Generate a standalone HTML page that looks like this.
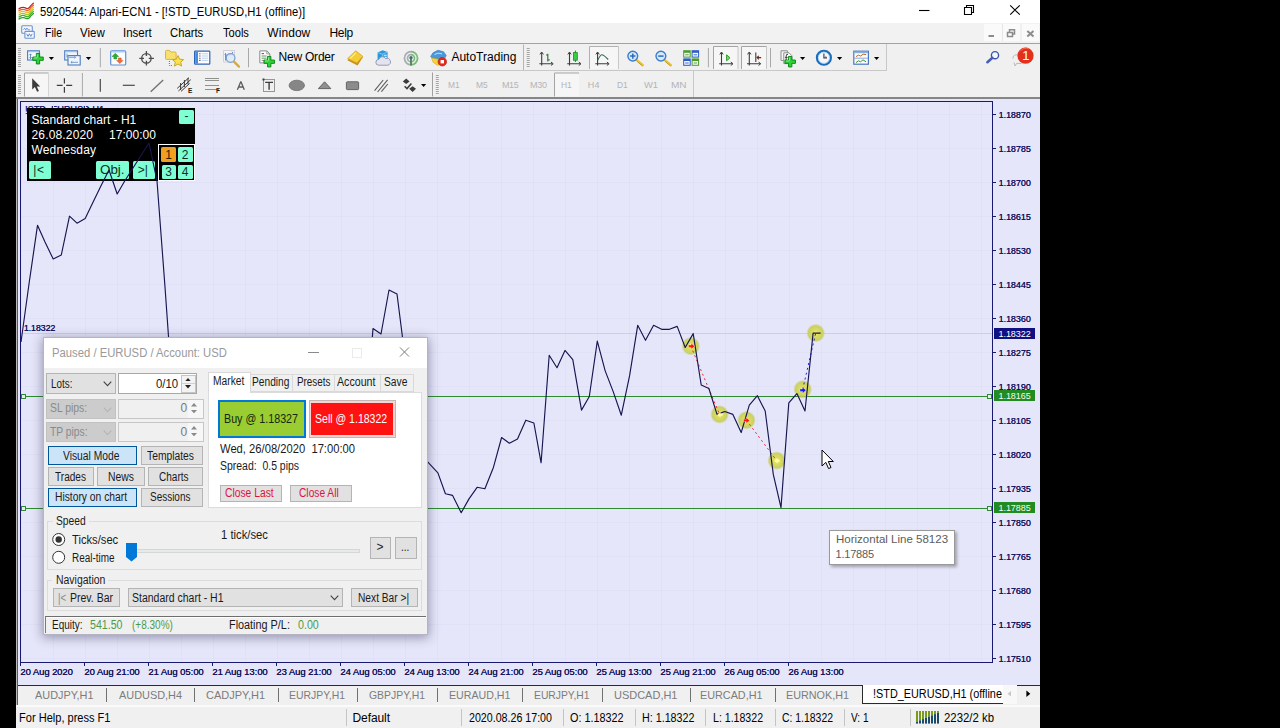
<!DOCTYPE html>
<html lang="en"><head><meta charset="utf-8"><title>5920544: Alpari-ECN1 - [!STD_EURUSD,H1 (offline)]</title>
<style>html,body{margin:0;padding:0;background:#000;}
body{width:1280px;height:728px;position:relative;overflow:hidden;font-family:"Liberation Sans",sans-serif;}
.b{position:absolute;display:block;}
.t{position:absolute;white-space:pre;line-height:1;transform-origin:0 0;}
</style></head><body>
<header id="window-top">
<div class="b" style="left:16px;top:0px;width:1024px;height:22.5px;background:#fff;"></div>
<span class="t" style="left:39.9px;top:6px;font-size:12px;color:#000;transform:scaleX(0.936);">5920544: Alpari-ECN1 - [!STD_EURUSD,H1 (offline)]</span>
<svg class="b" style="left:900px;top:0" width="140" height="22" viewBox="0 0 140 22"><path d="M19 10.5H29.5" stroke="#000" stroke-width="1.1"/><path d="M64.5 7.5H71.5V14.5H64.5ZM66.5 7.5V5.5H73.5V12.5H71.5" fill="none" stroke="#000" stroke-width="1.1"/><path d="M110.2 5.3L119.8 14.7M119.8 5.3L110.2 14.7" stroke="#000" stroke-width="1.1"/></svg>
<div class="b" style="left:16px;top:22.5px;width:1024px;height:20.5px;background:#f2f2f2;"></div>
<div class="b" style="left:16px;top:43px;width:1024px;height:1px;background:#a2a2a2;"></div>
<span class="t" style="left:44.5px;top:27px;font-size:12px;color:#000;transform:scaleX(0.879);">File</span>
<span class="t" style="left:80.2px;top:27px;font-size:12px;color:#000;transform:scaleX(0.961);">View</span>
<span class="t" style="left:123.3px;top:27px;font-size:12px;color:#000;transform:scaleX(0.956);">Insert</span>
<span class="t" style="left:170.2px;top:27px;font-size:12px;color:#000;transform:scaleX(0.939);">Charts</span>
<span class="t" style="left:222.5px;top:27px;font-size:12px;color:#000;transform:scaleX(0.925);">Tools</span>
<span class="t" style="left:267.3px;top:27px;font-size:12px;color:#000;letter-spacing:0.06px;">Window</span>
<span class="t" style="left:329.4px;top:27px;font-size:12px;color:#000;letter-spacing:-0.26px;">Help</span>
<div class="b" style="left:984px;top:24px;width:55px;height:17px;background:#fafafa;"></div>
<svg class="b" style="left:984px;top:24px" width="55" height="17" viewBox="0 0 55 17"><path d="M18.5 0V17M37 0V17" stroke="#e6e6e6" stroke-width="1"/><path d="M4.5 12H10" stroke="#8c8c8c" stroke-width="2"/><path d="M23.5 8.5H28.5V12.5H23.5ZM25.5 8V5.8H30.5V10H29" fill="none" stroke="#8c8c8c" stroke-width="1.5"/><path d="M43.3 7L49.5 12.6M49.5 7L43.3 12.6" stroke="#8c8c8c" stroke-width="2"/></svg>
<div class="b" style="left:16px;top:44px;width:1024px;height:54px;background:#f0f0f0;"></div>
<div class="b" style="left:16px;top:70px;width:870px;height:1px;background:#c8c8c8;"></div>
<div class="b" style="left:885.5px;top:44px;width:1px;height:27px;background:#c8c8c8;"></div>
<div class="b" style="left:693px;top:71px;width:1px;height:26px;background:#c8c8c8;"></div>
<div class="b" style="left:16px;top:97px;width:1024px;height:1.6px;background:#868686;"></div>
<svg class="b" style="left:16px;top:0" width="1024" height="100" viewBox="16 0 1024 100"><defs><linearGradient id="gb" x1="0" y1="0" x2="0" y2="1"><stop offset="0" stop-color="#9cc4f0"/><stop offset="1" stop-color="#dcecfc"/></linearGradient></defs><path d="M19 8.8Q22.5 6.2 25.5 8.0T30.6 5.8L33.4 3.2" stroke="#c82020" stroke-width="1.25" fill="none" stroke-linecap="round" stroke-dasharray="1.6 .7"/><path d="M19 10.8Q22.5 8.2 25.5 10.0T30.6 7.8L33.4 5.2" stroke="#e06a20" stroke-width="1.25" fill="none" stroke-linecap="round" stroke-dasharray="1.6 .7"/><path d="M19 12.9Q22.5 10.3 25.5 12.1T30.6 9.9L33.4 7.3" stroke="#e8c020" stroke-width="1.25" fill="none" stroke-linecap="round" stroke-dasharray="1.6 .7"/><path d="M19 14.9Q22.5 12.3 25.5 14.2T30.6 11.9L33.4 9.3" stroke="#9cc828" stroke-width="1.25" fill="none" stroke-linecap="round" stroke-dasharray="1.6 .7"/><path d="M19 17.0Q22.5 14.4 25.5 16.2T30.6 14.0L33.4 11.4" stroke="#3cae2c" stroke-width="1.25" fill="none" stroke-linecap="round" stroke-dasharray="1.6 .7"/><path d="M19 19.1Q22.5 16.5 25.5 18.2T30.6 16.1L33.4 13.5" stroke="#2c9a2c" stroke-width="1.25" fill="none" stroke-linecap="round" stroke-dasharray="1.6 .7"/><rect x="21.7" y="25.8" width="10.6" height="7.4" rx="1" fill="#f4f8fe" stroke="#6c94d4" stroke-width="1.1"/><path d="M23.5 29.6l1.2-1.4l1 1.8l1.2-2l1.2 1.8h2" stroke="#5a84c8" stroke-width=".8" fill="none"/><rect x="24.9" y="31.4" width="9.4" height="6.8" rx=".8" fill="#f4f8fe" stroke="#6c94d4" stroke-width="1.1"/><path d="M26.6 33.8l1.4 2.6l1.4-2.6l1.4 2.6l1.4-2.6" stroke="#4a74b8" stroke-width=".8" fill="none"/><path d="M18 48.5h3M18 50.5h3M18 52.5h3M18 54.5h3M18 56.5h3M18 58.5h3M18 60.5h3M18 62.5h3M18 64.5h3M18 66.5h3" stroke="#a4a4a4" stroke-width="1" fill="none"/><path d="M18 75.5h3M18 77.5h3M18 79.5h3M18 81.5h3M18 83.5h3M18 85.5h3M18 87.5h3M18 89.5h3M18 91.5h3M18 93.5h3" stroke="#a4a4a4" stroke-width="1" fill="none"/><rect x="27.6" y="50.8" width="11.8" height="9.2" fill="#f6faff" stroke="#4a7cc0" stroke-width="1.1"/><path d="M28 51.6H39" stroke="#9cc0ec" stroke-width="1.3"/><path d="M30.5 54v4.5M29.4 55.2l1.1-1.3l1.1 1.3M29.4 57.4l1.1 1.3l1.1-1.3" stroke="#5078b0" stroke-width=".8" fill="none"/><path d="M36.35 53.45H39.65V57.050000000000004H43.25V60.35H39.65V63.95H36.35V60.35H32.75V57.050000000000004H36.35Z" fill="#2fd03a" stroke="#0f8a1a" stroke-width="1" stroke-linejoin="round"/><path d="M37.25 54.45V57.650000000000006M33.75 57.95H36.95" stroke="#9ff0a0" stroke-width=".9" fill="none"/><path d="M48.8 57.0H54.0L51.4 59.9Z" fill="#000"/><rect x="64.7" y="50.8" width="12.8" height="9.2" fill="#eef5fd" stroke="#4a7cc0" stroke-width="1.1"/><path d="M65 51.6H77" stroke="#9cc0ec" stroke-width="1.3"/><rect x="68" y="55.6" width="12.2" height="9.4" fill="#eef5fd" stroke="#4a7cc0" stroke-width="1.1"/><path d="M67 53.6v4M69 57.3h6.5M74.3 56.2l1.3 1.1l-1.3 1.1M78 62.3h-7M72.2 61.2l-1.3 1.1l1.3 1.1" stroke="#5a86c4" stroke-width=".8" fill="none"/><path d="M85.9 57.0H91.1L88.5 59.9Z" fill="#000"/><path d="M100.3 48V67.3" stroke="#a8a8a8" stroke-width="1"/><rect x="110.7" y="50.8" width="15" height="14.2" rx="1" fill="#fbfdff" stroke="#5a90d8" stroke-width="1.2"/><path d="M111.2 51.8H125.2" stroke="#a8ccf4" stroke-width="1.4"/><path d="M115.3 53.3l3.3 3.2h-1.9v2.4h-2.8v-2.4h-1.9z" fill="#2cae34" stroke="#1a8a22" stroke-width=".5"/><path d="M119.8 63.6l-3.2-3.2h1.8v-2.4h2.8v2.4h1.8z" fill="#f06a3a" stroke="#d04a20" stroke-width=".5"/><circle cx="146.4" cy="58.4" r="4.7" fill="none" stroke="#4a4a4a" stroke-width="1.3"/><path d="M146.4 50.9V56M146.4 60.8V65.6M139.3 58.4H144M148.8 58.4H153.9" stroke="#4a4a4a" stroke-width="1.3" fill="none"/><path d="M165.5 51.4q0-1 1-1h3.2l1.2 1.6h4.2q1 0 1 1v5.6q0 .8-1 .8h-8.6q-1 0-1-.8z" fill="#f8e070" stroke="#d4b030" stroke-width=".9"/><path d="M169.4 61v4.5h2.6" stroke="#707070" stroke-width="1" stroke-dasharray="1 1" fill="none"/><path d="M178 55.6l1.7 3.6l3.9.4l-2.9 2.6l.9 3.9l-3.6-2.1l-3.6 2.1l.9-3.9l-2.9-2.6l3.9-.4z" fill="#fbe24a" stroke="#c8a018" stroke-width=".9" stroke-linejoin="round"/><rect x="194.6" y="51.2" width="15.2" height="13" rx=".8" fill="#fff" stroke="#2c64b4" stroke-width="1.2"/><rect x="195.2" y="51.8" width="2.8" height="11.8" fill="#4a8ae0"/><path d="M199.4 53.8h1M199.4 56h1M199.4 58.2h1M199.4 60.4h1" stroke="#102040" stroke-width="1.1"/><path d="M201.6 53.8h6.6M201.6 56h6.6M201.6 58.2h6.6M201.6 60.4h6.6" stroke="#a8c4e8" stroke-width=".8"/><rect x="223.6" y="50.6" width="11" height="11.4" fill="#f4f4f8" stroke="#c8c8d0" stroke-width=".8"/><path d="M225.5 60.5v-7M224.6 54.4l.9-1l.9 1M231.8 51.8l1.2 1l-1.2 1M225.5 56.5l2.6-2.6l2 1.6l2.6-2.8" stroke="#5a88c8" stroke-width=".9" fill="none"/><circle cx="230.6" cy="58" r="4.3" fill="#d8e8f8" fill-opacity=".75" stroke="#7aa0d0" stroke-width="1.2"/><path d="M234 61.6L239 66.6" stroke="#d8a838" stroke-width="2.2" stroke-linecap="round"/><path d="M248.5 48V67.3" stroke="#a8a8a8" stroke-width="1"/><path d="M259.8 50.9h7l3 3v9h-10z" fill="#fdfdfd" stroke="#8a8a8a" stroke-width="1"/><path d="M266.8 50.9v3h3" fill="none" stroke="#8a8a8a" stroke-width=".8"/><path d="M261.6 53.6h2.4" stroke="#606060" stroke-width="1.1"/><path d="M261.6 56h5M261.6 58.2h5" stroke="#58a060" stroke-width="1"/><path d="M261.6 60.4h3" stroke="#909090" stroke-width="1"/><path d="M267.55 56.45H270.84999999999997V60.050000000000004H274.45V63.35H270.84999999999997V66.95H267.55V63.35H263.95V60.050000000000004H267.55Z" fill="#2fd03a" stroke="#0f8a1a" stroke-width="1" stroke-linejoin="round"/><path d="M268.45 57.45V60.650000000000006M264.95 60.95H268.15000000000003" stroke="#9ff0a0" stroke-width=".9" fill="none"/><path d="M347.4 60.2L355.6 51l7.3 6.3l-5.4 8.1z" fill="#c8901c"/><path d="M347.6 58.6L355.8 50.8l7 5.6l-6 6.6z" fill="#f4cc34" stroke="#d0a020" stroke-width=".7"/><path d="M350 58.6l6-5.8" stroke="#fbe98a" stroke-width="1.4" fill="none"/><path d="M377.6 52.6l5-2.4l5 1.8v7.4h-10z" fill="#2c98dc"/><path d="M377.6 52.6l5 1.6l5-2.2M382.6 54.2v6" stroke="#8cd0f4" stroke-width=".8" fill="none"/><path d="M383.8 55.2h3M383.8 57.4h3" stroke="#e8f6ff" stroke-width="1.1"/><path d="M378.6 65.2a2.9 2.9 0 0 1 .3-5.8a3.6 3.6 0 0 1 6.6-.9a3.1 3.1 0 0 1 2.6 6.7z" fill="#e4e4f0" stroke="#8c94ac" stroke-width=".9"/><circle cx="411" cy="58.2" r="7.4" fill="#dcdcdc"/><path d="M411 50.8a7.4 7.4 0 0 1 0 14.8z" fill="#7cba7c"/><path d="M411 50.8a7.4 7.4 0 0 0 0 14.8z" fill="#a8aeb4"/><circle cx="411" cy="58.2" r="5" fill="none" stroke="#eef2ee" stroke-width="1.3"/><circle cx="411" cy="58.2" r="2.6" fill="#eef2ee"/><circle cx="411" cy="57.8" r="1.7" fill="#4a6a7a"/><path d="M411 58.5V65.4" stroke="#3c7c4c" stroke-width="1.6"/><path d="M430.6 56.4l2.4-3.6l5-2.6l5.6 1.6l2.6 3.6l-1 2.2l-6.6 1.6l-6-.8z" fill="#4a98dc" stroke="#2c78c0" stroke-width=".6"/><path d="M431.6 58l6.4 1.2l7.2-1.8l-1.6 4.8l-6 3.2l-4.6-3.2z" fill="#f4d43c" stroke="#d4ac20" stroke-width=".6"/><path d="M434.5 54.6q3-2.4 7.5-.8" stroke="#bfe0fa" stroke-width="1" fill="none"/><circle cx="442.3" cy="61.7" r="4.3" fill="#e02a1c" stroke="#b81a10" stroke-width=".6"/><rect x="440.6" y="60" width="3.4" height="3.4" fill="#fff"/><path d="M523.5 44.5V70" stroke="#b4b4b4" stroke-width="1"/><path d="M526.7 48.5h3M526.7 50.5h3M526.7 52.5h3M526.7 54.5h3M526.7 56.5h3M526.7 58.5h3M526.7 60.5h3M526.7 62.5h3M526.7 64.5h3M526.7 66.5h3" stroke="#a4a4a4" stroke-width="1" fill="none"/><path d="M541.6999999999999 65.4V52.6M539.4 63.75H552.4" stroke="#3c3c3c" stroke-width="1.1" fill="none"/><path d="M539.9999999999999 54.4L541.6999999999999 52L543.4 54.4M551.0 62.05L553.1999999999999 63.75L551.0 65.45" stroke="#3c3c3c" stroke-width="1" fill="none"/><path d="M547.8 53.8V61.4M546 55h1.8M547.8 59.8h1.9" stroke="#2c7c3c" stroke-width="1.2" fill="none"/><path d="M569.5 65.4V52.6M567.2 63.75H580.2" stroke="#3c3c3c" stroke-width="1.1" fill="none"/><path d="M567.8 54.4L569.5 52L571.2 54.4M578.8000000000001 62.05L581.0 63.75L578.8000000000001 65.45" stroke="#3c3c3c" stroke-width="1" fill="none"/><path d="M575.4 50.6V62" stroke="#1a8a2a" stroke-width="1"/><rect x="573.5" y="52.6" width="3.8" height="7.6" fill="#34d044" stroke="#1a8a2a" stroke-width=".8"/><rect x="589.5" y="46.5" width="29" height="22.5" fill="#f6f6f6"/><path d="M589.5 69V46.5H618.5" stroke="#b0b0b0" stroke-width="1" fill="none"/><path d="M618.5 46.5V69" stroke="#c8c8c8" stroke-width="1" fill="none"/><path d="M597.5999999999999 65.4V52.6M595.3 63.75H608.3" stroke="#3c3c3c" stroke-width="1.1" fill="none"/><path d="M595.8999999999999 54.4L597.5999999999999 52L599.3 54.4M606.9 62.05L609.0999999999999 63.75L606.9 65.45" stroke="#3c3c3c" stroke-width="1" fill="none"/><path d="M597.8 60Q600.4 54.4 602.2 54.7T608.2 59.5" stroke="#2c6c4c" stroke-width="1.1" fill="none"/><path d="M636.4 59.8L642.8 65.2" stroke="#e8c030" stroke-width="2.3" stroke-linecap="round"/><path d="M637.3 61.6L642.4 66" stroke="#a89030" stroke-width=".7"/><circle cx="632.8" cy="56.1" r="4.9" fill="#d8e8fa" stroke="#3a7cd0" stroke-width="1.4"/><path d="M630.0999999999999 56.1H635.5M632.8 53.4V58.8" stroke="#2c6cc0" stroke-width="1.5" fill="none"/><path d="M664.5 59.8L670.9 65.2" stroke="#e8c030" stroke-width="2.3" stroke-linecap="round"/><path d="M665.4 61.6L670.5 66" stroke="#a89030" stroke-width=".7"/><circle cx="660.9" cy="56.1" r="4.9" fill="#d8e8fa" stroke="#3a7cd0" stroke-width="1.4"/><path d="M658.1999999999999 56.1H663.6" stroke="#2c6cc0" stroke-width="1.5" fill="none"/><rect x="683.2" y="50.2" width="7.5" height="7.4" fill="#4c9c2c"/><rect x="684.2" y="52.800000000000004" width="5.5" height="3.8" fill="#f4f8ff"/><path d="M685.2 54.800000000000004h3.5" stroke="#4c9c2c" stroke-width=".9"/><rect x="691.6" y="50.2" width="7.5" height="7.4" fill="#2c5cc4"/><rect x="692.6" y="52.800000000000004" width="5.5" height="3.8" fill="#f4f8ff"/><path d="M693.6 54.800000000000004h3.5" stroke="#2c5cc4" stroke-width=".9"/><rect x="683.2" y="58.4" width="7.5" height="7.4" fill="#2c5cc4"/><rect x="684.2" y="61.0" width="5.5" height="3.8" fill="#f4f8ff"/><path d="M685.2 63.0h3.5" stroke="#2c5cc4" stroke-width=".9"/><rect x="691.6" y="58.4" width="7.5" height="7.4" fill="#4c9c2c"/><rect x="692.6" y="61.0" width="5.5" height="3.8" fill="#f4f8ff"/><path d="M693.6 63.0h3.5" stroke="#4c9c2c" stroke-width=".9"/><path d="M708.4 48V67.3" stroke="#a8a8a8" stroke-width="1"/><rect x="713.5" y="46.5" width="24.5" height="22.5" fill="#f6f6f6"/><path d="M713.5 69V46.5H738.0" stroke="#a4a4a4" stroke-width="1" fill="none"/><path d="M738.0 46.5V69" stroke="#c8c8c8" stroke-width="1" fill="none"/><rect x="741.5" y="46.5" width="25" height="22.5" fill="#f6f6f6"/><path d="M741.5 69V46.5H766.5" stroke="#a4a4a4" stroke-width="1" fill="none"/><path d="M766.5 46.5V69" stroke="#c8c8c8" stroke-width="1" fill="none"/><path d="M721.5 65.4V52.6M719.2 63.75H732.2" stroke="#3c3c3c" stroke-width="1.1" fill="none"/><path d="M719.8 54.4L721.5 52L723.2 54.4M730.8000000000001 62.05L733.0 63.75L730.8000000000001 65.45" stroke="#3c3c3c" stroke-width="1" fill="none"/><path d="M726.6 54.8V60.8L730 57.8Z" fill="#7cdc6c" stroke="#2c9c2c" stroke-width="1" stroke-linejoin="round"/><path d="M749.3 65.4V52.6M747 63.75H760" stroke="#3c3c3c" stroke-width="1.1" fill="none"/><path d="M747.5999999999999 54.4L749.3 52L751.0 54.4M758.6 62.05L760.8 63.75L758.6 65.45" stroke="#3c3c3c" stroke-width="1" fill="none"/><path d="M755.8 52.6V62" stroke="#3c3c3c" stroke-width="1.1"/><path d="M761.2 57.6H757M758.8 55.8L757 57.6L758.8 59.4" stroke="#6c2c1c" stroke-width="1.1" fill="none"/><path d="M770.5 48V67.3" stroke="#a8a8a8" stroke-width="1"/><path d="M781 50.8h6.4v9.6h-6.4z" fill="#f6f6f6" stroke="#8c8c8c" stroke-width="1"/><path d="M783.8 52.8h5.2l2.8 2.8v8h-8z" fill="#fdfdfd" stroke="#8c8c8c" stroke-width="1"/><path d="M788 54.4q-1.8-.6-1.8 1.6v5M785 57.4h2.6" stroke="#404040" stroke-width="1" fill="none"/><path d="M788.5500000000001 56.45H791.85V60.050000000000004H795.45V63.35H791.85V66.95H788.5500000000001V63.35H784.95V60.050000000000004H788.5500000000001Z" fill="#2fd03a" stroke="#0f8a1a" stroke-width="1" stroke-linejoin="round"/><path d="M789.45 57.45V60.650000000000006M785.95 60.95H789.1500000000001" stroke="#9ff0a0" stroke-width=".9" fill="none"/><path d="M800.0 57.0H805.2L802.6 59.9Z" fill="#000"/><circle cx="823.9" cy="57.75" r="7" fill="#f4f8fc" stroke="#1c6cbc" stroke-width="2.2"/><circle cx="823.9" cy="57.75" r="5.6" fill="none" stroke="#9cc8ec" stroke-width=".7"/><path d="M823.9 53.6V57.9H827" stroke="#303840" stroke-width="1.1" fill="none"/><path d="M823.9 57.9l2.4-1.4" stroke="#c04030" stroke-width=".8"/><path d="M837.0 57.0H842.2L839.6 59.9Z" fill="#000"/><rect x="853.8" y="51.2" width="14.6" height="13" fill="#fbfdff" stroke="#4a78c0" stroke-width="1.2"/><path d="M854.4 52.4H868" stroke="#88b0e4" stroke-width="1.6"/><path d="M854.4 58.2H868" stroke="#6c94d0" stroke-width=".8"/><path d="M856 56.6l2.4-1.4l2.2.8l2.6-1.8l3 .4" stroke="#b86a20" stroke-width="1" fill="none"/><path d="M856 62.6l2.4-1.8l2.2 1l2.4-2l3 2" stroke="#3c8c3c" stroke-width="1" fill="none"/><path d="M874.0 57.0H879.2L876.6 59.9Z" fill="#000"/><circle cx="995" cy="55.2" r="3.6" fill="#f4f6fc" stroke="#3c54ac" stroke-width="1.4"/><path d="M992.4 57.8L987.4 62.2" stroke="#4460b8" stroke-width="2.6" stroke-linecap="round"/><path d="M1013 58.5a3.4 3.4 0 0 1 4.5-3.6M1014 62.6l1.2 3.4l1.4-2.6h5" stroke="#b8b8b8" stroke-width="1" fill="none"/><circle cx="1025.5" cy="55.7" r="8.1" fill="#e2301c"/><path d="M1020 51.5a7 7 0 0 1 9-2.6" stroke="#f06a50" stroke-width="1" fill="none"/><rect x="24.5" y="73" width="24" height="23.5" fill="#f6f6f6"/><path d="M24.5 96.5V73H48.5" stroke="#a4a4a4" stroke-width="1" fill="none"/><path d="M48.5 73V96.5" stroke="#d4d4d4" stroke-width="1" fill="none"/><path d="M32.2 78.2V89.6L34.9 87.1L37.1 91.8L38.9 90.9L36.8 86.4H40.2Z" fill="#3c3c3c"/><path d="M64.4 78.2V83.6M64.4 87V92.8M56.8 85.3H62.6M66.2 85.3H72.2" stroke="#3c3c3c" stroke-width="1.2" fill="none"/><path d="M82.4 73V96.4" stroke="#a8a8a8" stroke-width="1"/><path d="M100.3 79V91.7" stroke="#4a4a4a" stroke-width="1.2"/><path d="M122.8 85.3H134.8" stroke="#4a4a4a" stroke-width="1.2"/><path d="M150.7 91.7L163.2 80" stroke="#707070" stroke-width="1.3"/><path d="M177.2 88.4L189 77.6M178.4 91L190.8 79.6M181 91.4L189.6 83.4M180.6 83v7M184.4 80v7M188 78v6.4" stroke="#3c3c3c" stroke-width="1" fill="none"/><path d="M205.5 78.5H219.5M205.5 80.5H219.5M205.5 85.5H219.5M205.5 89.5H219.5" stroke="#303030" stroke-width="1" stroke-dasharray="1 1" fill="none"/><path d="M240.85 81.4L237.4 89.8M240.85 81.4L244.3 89.8M238.6 87h4.6" stroke="#5c5c5c" stroke-width="1.3" fill="none"/><rect x="263.5" y="79.5" width="11" height="12" fill="none" stroke="#3c3c3c" stroke-width="1" stroke-dasharray="1 1"/><path d="M265.2 82.4H273M269.1 82.4V89.8" stroke="#3c3c3c" stroke-width="1.4" fill="none"/><rect x="262.5" y="78.5" width="2" height="2" fill="#3c3c3c"/><ellipse cx="296.8" cy="85.4" rx="7.7" ry="5.2" fill="#868686" stroke="#6c6c6c" stroke-width=".8"/><path d="M324.6 81.8L330.8 88.6H318.4Z" fill="#909090" stroke="#646464" stroke-width="1" stroke-linejoin="round"/><rect x="346.4" y="81.8" width="12.2" height="7.8" rx=".8" fill="#8c8c8c" stroke="#646464" stroke-width="1"/><path d="M374.6 90.6L383.2 80M377.6 92L387.6 79.8M381.4 91.6L387.8 84" stroke="#5c5c5c" stroke-width="1.1" fill="none"/><path d="M406.2 78.4L409.6 81.6L406.2 84L402.8 81.6ZM412.6 92L409.2 88.8L412.6 86.2L416 88.8Z" fill="#3c3c3c"/><path d="M404.6 86.2l2.4 2.4l4.4-5.2" stroke="#3c3c3c" stroke-width="1.5" fill="none"/><path d="M421.0 84.0H426.20000000000005L423.6 86.9Z" fill="#000"/><path d="M432.5 72.5V96.4" stroke="#a0a0a0" stroke-width="1"/><path d="M435.8 75.5h3M435.8 77.5h3M435.8 79.5h3M435.8 81.5h3M435.8 83.5h3M435.8 85.5h3M435.8 87.5h3M435.8 89.5h3M435.8 91.5h3M435.8 93.5h3" stroke="#a4a4a4" stroke-width="1" fill="none"/><rect x="554.5" y="73" width="24.5" height="23.5" fill="#f6f6f6"/><path d="M554.5 96.5V73H579" stroke="#a4a4a4" stroke-width="1" fill="none"/></svg>
<span class="t" style="left:188.1px;top:88px;font-size:6.5px;color:#1c1c1c;font-weight:bold;">E</span>
<span class="t" style="left:215.9px;top:88px;font-size:6.5px;color:#1c1c1c;font-weight:bold;">F</span>
<span class="t" style="left:278.6px;top:51px;font-size:12px;color:#000;letter-spacing:-0.23px;">New Order</span>
<span class="t" style="left:451.4px;top:51px;font-size:12px;color:#000;letter-spacing:0.01px;">AutoTrading</span>
<span class="t" style="left:448px;top:81px;font-size:9px;color:#b4b4b4;transform:scaleX(0.936);">M1</span>
<span class="t" style="left:476.1px;top:81px;font-size:9px;color:#b4b4b4;transform:scaleX(0.936);">M5</span>
<span class="t" style="left:501.9px;top:81px;font-size:9px;color:#b4b4b4;letter-spacing:-0.30px;">M15</span>
<span class="t" style="left:530px;top:81px;font-size:9px;color:#b4b4b4;letter-spacing:-0.30px;">M30</span>
<span class="t" style="left:561.1px;top:81px;font-size:9px;color:#b4b4b4;transform:scaleX(0.939);">H1</span>
<span class="t" style="left:587.8px;top:81px;font-size:9px;color:#b4b4b4;letter-spacing:0.19px;">H4</span>
<span class="t" style="left:616.9px;top:81px;font-size:9px;color:#b4b4b4;transform:scaleX(0.939);">D1</span>
<span class="t" style="left:644px;top:81px;font-size:9px;color:#b4b4b4;transform:scaleX(1.044);">W1</span>
<span class="t" style="left:670.7px;top:81px;font-size:9px;color:#b4b4b4;transform:scaleX(1.115);">MN</span>
<span class="t" style="left:1022.2px;top:49px;font-size:13px;color:#fff;">1</span>
</header>
<main id="chart">
<div class="b" style="left:18px;top:99px;width:1022px;height:586px;background:#e6e6fa;"></div>
<span class="t" style="left:24.9px;top:106px;font-size:10px;color:#191970;transform:scaleX(0.917);text-shadow:.3px 0 0 #191970;">!STD_EURUSD,H1</span>
<svg class="b" style="left:0;top:0" width="1280" height="728" viewBox="0 0 1280 728"><path d="M21.5 102V662 M53.5 102V662 M85.5 102V662 M117.5 102V662 M149.5 102V662 M181.5 102V662 M213.5 102V662 M245.5 102V662 M277.5 102V662 M309.5 102V662 M341.5 102V662 M373.5 102V662 M405.5 102V662 M437.5 102V662 M469.5 102V662 M501.5 102V662 M533.5 102V662 M565.5 102V662 M597.5 102V662 M629.5 102V662 M661.5 102V662 M693.5 102V662 M725.5 102V662 M757.5 102V662 M789.5 102V662 M821.5 102V662 M853.5 102V662 M885.5 102V662 M917.5 102V662 M949.5 102V662 M981.5 102V662 M21 114.5H992 M21 148.5H992 M21 182.5H992 M21 216.5H992 M21 250.5H992 M21 284.5H992 M21 318.5H992 M21 352.5H992 M21 386.5H992 M21 420.5H992 M21 454.5H992 M21 488.5H992 M21 522.5H992 M21 556.5H992 M21 590.5H992 M21 624.5H992 M21 658.5H992" stroke="#e0e0f6" stroke-width="1" fill="none"/><path d="M21 333.5H992" stroke="#cfcfe0" stroke-width="1"/></svg>
<div class="b" style="left:27px;top:108px;width:168px;height:73px;background:#000;"></div>
<span class="t" style="left:31.5px;top:114px;font-size:12px;color:#fff;">Standard chart - H1</span>
<span class="t" style="left:31.5px;top:129px;font-size:12px;color:#fff;letter-spacing:0.16px;">26.08.2020</span>
<span class="t" style="left:109px;top:129px;font-size:12px;color:#fff;letter-spacing:0.04px;">17:00:00</span>
<span class="t" style="left:31.5px;top:144px;font-size:12px;color:#fff;letter-spacing:0.17px;">Wednesday</span>
<div class="b" style="left:179px;top:109.5px;width:15px;height:14px;background:#7fffd4;border-radius:1.5px;"></div>
<span class="t" style="left:184.5px;top:110px;font-size:12px;color:#103020;">-</span>
<div class="b" style="left:29px;top:161px;width:22px;height:17.5px;background:#7fffd4;border-radius:1.5px;"></div>
<span class="t" style="left:33.2px;top:164px;font-size:12px;color:#103020;letter-spacing:0.68px;">|&lt;</span>
<div class="b" style="left:96px;top:161px;width:33px;height:17.5px;background:#7fffd4;border-radius:1.5px;"></div>
<span class="t" style="left:99.5px;top:164px;font-size:12px;color:#103020;transform:scaleX(1.113);">Obj.</span>
<div class="b" style="left:133px;top:161px;width:21.5px;height:17.5px;background:#7fffd4;border-radius:1.5px;"></div>
<span class="t" style="left:137.8px;top:164px;font-size:12px;color:#103020;letter-spacing:-0.12px;">&gt;|</span>
<div class="b" style="left:158px;top:144px;width:37px;height:37px;background:#000;border:1px solid #fff;box-sizing:border-box;"></div>
<div class="b" style="left:161px;top:147px;width:14.5px;height:14.5px;background:#f0a020;border-radius:1.5px;"></div>
<div class="b" style="left:178px;top:147px;width:14.5px;height:14.5px;background:#7fffd4;border-radius:1.5px;"></div>
<div class="b" style="left:161.5px;top:164.5px;width:14.5px;height:14px;background:#7fffd4;border-radius:1.5px;"></div>
<div class="b" style="left:178px;top:164.5px;width:14.5px;height:14px;background:#7fffd4;border-radius:1.5px;"></div>
<span class="t" style="left:165.3px;top:149px;font-size:12px;color:#302000;">1</span>
<span class="t" style="left:181.8px;top:149px;font-size:12px;color:#103020;">2</span>
<span class="t" style="left:165.3px;top:166px;font-size:12px;color:#103020;">3</span>
<span class="t" style="left:181.8px;top:166px;font-size:12px;color:#103020;">4</span>
<svg class="b" style="left:0;top:0" width="1280" height="728" viewBox="0 0 1280 728"><path d="M20.5 101V662.5M20 101.5H993M992.5 101V663M20 662.5H993" stroke="#191970" stroke-width="1" fill="none"/><path d="M993 114.5H996 M993 148.5H996 M993 182.5H996 M993 216.5H996 M993 250.5H996 M993 284.5H996 M993 318.5H996 M993 352.5H996 M993 386.5H996 M993 420.5H996 M993 454.5H996 M993 488.5H996 M993 522.5H996 M993 556.5H996 M993 590.5H996 M993 624.5H996 M993 658.5H996 M20.5 663V666 M84.5 663V666 M148.5 663V666 M212.5 663V666 M276.5 663V666 M340.5 663V666 M404.5 663V666 M468.5 663V666 M532.5 663V666 M596.5 663V666 M660.5 663V666 M724.5 663V666 M788.5 663V666" stroke="#191970" stroke-width="1" fill="none"/><path d="M21 396.5H992M21 508.5H992" stroke="#2e8b2e" stroke-width="1.2" fill="none"/><g fill="#eaeafa" stroke="#2e8b2e" stroke-width="1"><rect x="21.5" y="394.5" width="4" height="4"/><rect x="21.5" y="506.5" width="4" height="4"/><rect x="987.5" y="394.5" width="4" height="4"/><rect x="987.5" y="506.5" width="4" height="4"/></g><defs><radialGradient id="hl"><stop offset="0" stop-color="#f8f868" stop-opacity="1"/><stop offset="0.3" stop-color="#dede54" stop-opacity=".95"/><stop offset="0.78" stop-color="#c4cc50" stop-opacity=".85"/><stop offset="1" stop-color="#c8d068" stop-opacity="0"/></radialGradient></defs><circle cx="690.8" cy="346.1" r="9.5" fill="url(#hl)"/><circle cx="719.6" cy="414.4" r="9.5" fill="url(#hl)"/><circle cx="746.4" cy="420.2" r="9.5" fill="url(#hl)"/><circle cx="776.7" cy="460.6" r="9.5" fill="url(#hl)"/><circle cx="802.7" cy="389.3" r="9.5" fill="url(#hl)"/><circle cx="815.7" cy="333.1" r="9.5" fill="url(#hl)"/><path d="M690.8 346.1L719.6 414.4M746.4 420.2L776.7 460.6" stroke="#f02828" stroke-width="1" stroke-dasharray="2 3" fill="none"/><path d="M802.7 389.3L815.7 333.1" stroke="#2020e0" stroke-width="1" stroke-dasharray="2 3" fill="none"/><path d="M21 342L29 284L37.5 225.3L45 242L53.2 259L61.3 255L69.5 216.2L77 223.2L85.2 218.6L93 202.3L101 185.8L109 170L117.2 194L125 180.5L133 168L141 155.5L149 143L157 181L165 287L173 400" stroke="#161650" stroke-width="1.15" fill="none" stroke-linejoin="round"/><path d="M365 430L373 328.6L381 334L389 290L397 294L405 357" stroke="#161650" stroke-width="1.15" fill="none" stroke-linejoin="round"/><path d="M421 455L427.2 461.4L437.9 472.9L445.4 493.7L452.6 495.4L461.2 512.7L469 498.9L477.1 487.3L484.9 488.8L493.5 467.2L501.6 437.5L509.4 443.2L517.5 438.9L525.8 420.2L533.9 423L541.1 462.8L549.2 355.3L557 367.7L565 350.4L572.8 359.6L581.5 410.1L589.3 396.5L597.3 341.1L605.1 370.6L613.2 391.6L621.3 415.2L629.6 375.7L637.7 325.3L645.5 340.3L653.6 325.3L661.6 329.3L669.4 329.3L677.2 326.4L685.2 347.5L693.2 333.6L701.2 385L708.9 388.5L717 414.4L724.8 411.5L732.9 414.4L741.2 432.6L749.3 405.2L757.4 395.7L765.2 411L773.3 474.4L781 507.6L788.8 402.9L796.9 393.6L805 411L813.1 333.1L820.6 333.1" stroke="#161650" stroke-width="1.15" fill="none" stroke-linejoin="round"/><path d="M688.6 345.1h2.6v-1.8l3.4 3.0l-3.4 3.0v-1.8h-2.6z" fill="#ff1408" stroke="#fff" stroke-opacity=".55" stroke-width=".6"/><path d="M743.6 419.2h2.6v-1.8l3.4 3.0l-3.4 3.0v-1.8h-2.6z" fill="#ff1408" stroke="#fff" stroke-opacity=".55" stroke-width=".6"/><path d="M800.0 389.0h2.6v-1.8l3.4 3.0l-3.4 3.0v-1.8h-2.6z" fill="#1414ff" stroke="#fff" stroke-opacity=".55" stroke-width=".6"/><path d="M722.4 413.64000000000004h-2.08v-1.4400000000000002l-2.72 2.4000000000000004l2.72 2.4000000000000004v-1.4400000000000002h2.08z" fill="#ffff90" stroke="#fff" stroke-opacity=".55" stroke-width=".6"/><path d="M779.4 459.84000000000003h-2.08v-1.4400000000000002l-2.72 2.4000000000000004l2.72 2.4000000000000004v-1.4400000000000002h2.08z" fill="#ffff90" stroke="#fff" stroke-opacity=".55" stroke-width=".6"/></svg>
<span class="t" style="left:23.7px;top:324px;font-size:9px;color:#14145e;letter-spacing:-0.16px;text-shadow:.25px 0 0 #14145e;">1.18322</span>
<span class="t" style="left:998.5px;top:111px;font-size:9px;color:#14145e;letter-spacing:-0.06px;text-shadow:.25px 0 0 #14145e;">1.18870</span>
<span class="t" style="left:998.5px;top:145px;font-size:9px;color:#14145e;letter-spacing:-0.06px;text-shadow:.25px 0 0 #14145e;">1.18785</span>
<span class="t" style="left:998.5px;top:179px;font-size:9px;color:#14145e;letter-spacing:-0.06px;text-shadow:.25px 0 0 #14145e;">1.18700</span>
<span class="t" style="left:998.5px;top:213px;font-size:9px;color:#14145e;letter-spacing:-0.06px;text-shadow:.25px 0 0 #14145e;">1.18615</span>
<span class="t" style="left:998.5px;top:247px;font-size:9px;color:#14145e;letter-spacing:-0.06px;text-shadow:.25px 0 0 #14145e;">1.18530</span>
<span class="t" style="left:998.5px;top:281px;font-size:9px;color:#14145e;letter-spacing:-0.06px;text-shadow:.25px 0 0 #14145e;">1.18445</span>
<span class="t" style="left:998.5px;top:315px;font-size:9px;color:#14145e;letter-spacing:-0.06px;text-shadow:.25px 0 0 #14145e;">1.18360</span>
<span class="t" style="left:998.5px;top:349px;font-size:9px;color:#14145e;letter-spacing:-0.06px;text-shadow:.25px 0 0 #14145e;">1.18275</span>
<span class="t" style="left:998.5px;top:383px;font-size:9px;color:#14145e;letter-spacing:-0.06px;text-shadow:.25px 0 0 #14145e;">1.18190</span>
<span class="t" style="left:998.5px;top:417px;font-size:9px;color:#14145e;letter-spacing:-0.06px;text-shadow:.25px 0 0 #14145e;">1.18105</span>
<span class="t" style="left:998.5px;top:451px;font-size:9px;color:#14145e;letter-spacing:-0.06px;text-shadow:.25px 0 0 #14145e;">1.18020</span>
<span class="t" style="left:998.5px;top:485px;font-size:9px;color:#14145e;letter-spacing:-0.06px;text-shadow:.25px 0 0 #14145e;">1.17935</span>
<span class="t" style="left:998.5px;top:519px;font-size:9px;color:#14145e;letter-spacing:-0.06px;text-shadow:.25px 0 0 #14145e;">1.17850</span>
<span class="t" style="left:998.5px;top:553px;font-size:9px;color:#14145e;letter-spacing:-0.06px;text-shadow:.25px 0 0 #14145e;">1.17765</span>
<span class="t" style="left:998.5px;top:587px;font-size:9px;color:#14145e;letter-spacing:-0.06px;text-shadow:.25px 0 0 #14145e;">1.17680</span>
<span class="t" style="left:998.5px;top:621px;font-size:9px;color:#14145e;letter-spacing:-0.06px;text-shadow:.25px 0 0 #14145e;">1.17595</span>
<span class="t" style="left:998.5px;top:655px;font-size:9px;color:#14145e;letter-spacing:-0.06px;text-shadow:.25px 0 0 #14145e;">1.17510</span>
<div class="b" style="left:994px;top:328px;width:41px;height:11px;background:#101080;"></div>
<span class="t" style="left:998.5px;top:330px;font-size:9px;color:#fff;letter-spacing:-0.06px;">1.18322</span>
<div class="b" style="left:994px;top:390px;width:41px;height:11px;background:#228b22;"></div>
<span class="t" style="left:998.5px;top:392px;font-size:9px;color:#f0fff0;letter-spacing:-0.06px;">1.18165</span>
<div class="b" style="left:994px;top:502px;width:41px;height:11px;background:#228b22;"></div>
<span class="t" style="left:998.5px;top:504px;font-size:9px;color:#f0fff0;letter-spacing:-0.06px;">1.17885</span>
<span class="t" style="left:20.3px;top:667px;font-size:9.5px;color:#10105c;letter-spacing:-0.09px;text-shadow:.25px 0 0 #10105c;">20 Aug 2020</span>
<span class="t" style="left:84.3px;top:667px;font-size:9.5px;color:#10105c;letter-spacing:-0.06px;text-shadow:.25px 0 0 #10105c;">20 Aug 21:00</span>
<span class="t" style="left:148.3px;top:667px;font-size:9.5px;color:#10105c;letter-spacing:-0.06px;text-shadow:.25px 0 0 #10105c;">21 Aug 05:00</span>
<span class="t" style="left:212.3px;top:667px;font-size:9.5px;color:#10105c;letter-spacing:-0.06px;text-shadow:.25px 0 0 #10105c;">21 Aug 13:00</span>
<span class="t" style="left:276.3px;top:667px;font-size:9.5px;color:#10105c;letter-spacing:-0.06px;text-shadow:.25px 0 0 #10105c;">23 Aug 21:00</span>
<span class="t" style="left:340.3px;top:667px;font-size:9.5px;color:#10105c;letter-spacing:-0.06px;text-shadow:.25px 0 0 #10105c;">24 Aug 05:00</span>
<span class="t" style="left:404.3px;top:667px;font-size:9.5px;color:#10105c;letter-spacing:-0.06px;text-shadow:.25px 0 0 #10105c;">24 Aug 13:00</span>
<span class="t" style="left:468.3px;top:667px;font-size:9.5px;color:#10105c;letter-spacing:-0.06px;text-shadow:.25px 0 0 #10105c;">24 Aug 21:00</span>
<span class="t" style="left:532.3px;top:667px;font-size:9.5px;color:#10105c;letter-spacing:-0.06px;text-shadow:.25px 0 0 #10105c;">25 Aug 05:00</span>
<span class="t" style="left:596.3px;top:667px;font-size:9.5px;color:#10105c;letter-spacing:-0.06px;text-shadow:.25px 0 0 #10105c;">25 Aug 13:00</span>
<span class="t" style="left:660.3px;top:667px;font-size:9.5px;color:#10105c;letter-spacing:-0.06px;text-shadow:.25px 0 0 #10105c;">25 Aug 21:00</span>
<span class="t" style="left:724.3px;top:667px;font-size:9.5px;color:#10105c;letter-spacing:-0.06px;text-shadow:.25px 0 0 #10105c;">26 Aug 05:00</span>
<span class="t" style="left:788.3px;top:667px;font-size:9.5px;color:#10105c;letter-spacing:-0.06px;text-shadow:.25px 0 0 #10105c;">26 Aug 13:00</span>
<div class="b" style="left:829px;top:530px;width:126px;height:35px;background:#fff;border:1px solid #9a9a9a;box-sizing:border-box;box-shadow:2px 2px 3px rgba(0,0,0,.3);"></div>
<span class="t" style="left:835.5px;top:534px;font-size:11px;color:#5c5c5c;transform:scaleX(1.047);">Horizontal Line 58123</span>
<span class="t" style="left:835.5px;top:549px;font-size:11px;color:#5c5c5c;letter-spacing:-0.21px;">1.17885</span>
<svg class="b" style="left:821px;top:449px" width="14" height="21" viewBox="0 0 14 21"><path d="M1 1V17L4.8 13.4L7.6 19.6L10 18.5L7.3 12.5H12.3Z" fill="#fff" stroke="#000" stroke-width="1" stroke-linejoin="miter"/></svg>
</main>
<section id="trade-panel">
<div class="b" style="left:43px;top:337px;width:385px;height:298px;background:#f0f0f0;box-shadow:0 2px 10px 1px rgba(40,40,80,.42);outline:1px solid rgba(120,120,150,.5);outline-offset:-1px;"></div>
<div class="b" style="left:44px;top:338px;width:383px;height:30px;background:#fff;"></div>
<span class="t" style="left:52.3px;top:347px;font-size:12px;color:#9a9a9a;transform:scaleX(0.940);">Paused / EURUSD / Account: USD</span>
<svg class="b" style="left:300px;top:340px" width="120" height="26" viewBox="0 0 120 26"><path d="M8 12.5H19" stroke="#8a8a8a" stroke-width="1"/><rect x="52.5" y="8.5" width="9" height="9" fill="none" stroke="#ebebeb" stroke-width="1"/><path d="M100 7.5L109 16.5M109 7.5L100 16.5" stroke="#7a7a7a" stroke-width="1"/></svg>
<div class="b" style="left:46px;top:373px;width:70px;height:21px;background:#e1e1e1;border:1px solid #b4b4b4;box-sizing:border-box;"></div>
<span class="t" style="left:50.7px;top:378px;font-size:12px;color:#1a1a1a;transform:scaleX(0.823);">Lots:</span>
<svg class="b" style="left:102.7px;top:381px" width="9" height="6" viewBox="0 0 9 6"><path d="M.7 .7L4.5 4.6L8.3 .7" stroke="#444" stroke-width="1.1" fill="none"/></svg>
<div class="b" style="left:118px;top:373px;width:79px;height:21px;background:#fff;border:1px solid #a8a8a8;box-sizing:border-box;"></div>
<span class="t" style="left:156.2px;top:378px;font-size:12px;color:#1a1a1a;transform:scaleX(0.951);">0/10</span>
<div class="b" style="left:181px;top:375px;width:14.5px;height:17.5px;background:#f3f3f3;border:1px solid #c4c4c4;box-sizing:border-box;"></div>
<div class="b" style="left:182px;top:383.3px;width:12.5px;height:1px;background:#d0d0d0;"></div>
<svg class="b" style="left:184.8px;top:377.90000000000003px" width="6" height="3.4" viewBox="0 0 6 3.4"><path d="M0 3.4L3 0L6 3.4Z" fill="#222"/></svg><svg class="b" style="left:184.8px;top:385.3px" width="6" height="3.4" viewBox="0 0 6 3.4"><path d="M0 0L3 3.4L6 0Z" fill="#222"/></svg>
<div class="b" style="left:46px;top:398.5px;width:70px;height:20px;background:#cccccc;border:1px solid #c2c2c2;box-sizing:border-box;"></div>
<span class="t" style="left:50.2px;top:402px;font-size:12px;color:#8a8a8a;transform:scaleX(0.867);">SL pips:</span>
<svg class="b" style="left:102.7px;top:406.5px" width="9" height="6" viewBox="0 0 9 6"><path d="M.7 .7L4.5 4.6L8.3 .7" stroke="#b4b4b4" stroke-width="1.1" fill="none"/></svg>
<div class="b" style="left:118px;top:398.5px;width:85.5px;height:20px;background:#f0f0f0;border:1px solid #c6c6c6;box-sizing:border-box;"></div>
<div class="b" style="left:188px;top:399.5px;width:14.5px;height:18px;background:#f7f7f7;"></div>
<span class="t" style="left:180.4px;top:402px;font-size:12px;color:#7a7a7a;">0</span>
<svg class="b" style="left:191.2px;top:403.3px" width="6" height="3.4" viewBox="0 0 6 3.4"><path d="M0 3.4L3 0L6 3.4Z" fill="#8a8a8a"/></svg><svg class="b" style="left:191.2px;top:410.0px" width="6" height="3.4" viewBox="0 0 6 3.4"><path d="M0 0L3 3.4L6 0Z" fill="#8a8a8a"/></svg>
<div class="b" style="left:46px;top:421.5px;width:70px;height:20px;background:#cccccc;border:1px solid #c2c2c2;box-sizing:border-box;"></div>
<span class="t" style="left:50.2px;top:426px;font-size:12px;color:#8a8a8a;transform:scaleX(0.858);">TP pips:</span>
<svg class="b" style="left:102.7px;top:429.5px" width="9" height="6" viewBox="0 0 9 6"><path d="M.7 .7L4.5 4.6L8.3 .7" stroke="#b4b4b4" stroke-width="1.1" fill="none"/></svg>
<div class="b" style="left:118px;top:421.5px;width:85.5px;height:20px;background:#f0f0f0;border:1px solid #c6c6c6;box-sizing:border-box;"></div>
<div class="b" style="left:188px;top:422.5px;width:14.5px;height:18px;background:#f7f7f7;"></div>
<span class="t" style="left:180.4px;top:426px;font-size:12px;color:#7a7a7a;">0</span>
<svg class="b" style="left:191.2px;top:426.3px" width="6" height="3.4" viewBox="0 0 6 3.4"><path d="M0 3.4L3 0L6 3.4Z" fill="#8a8a8a"/></svg><svg class="b" style="left:191.2px;top:433.0px" width="6" height="3.4" viewBox="0 0 6 3.4"><path d="M0 0L3 3.4L6 0Z" fill="#8a8a8a"/></svg>
<div class="b" style="left:48px;top:446px;width:89px;height:19px;background:#cce4f7;border:1px solid #00559b;box-sizing:border-box;"></div><span class="t" style="left:63.4px;top:450px;font-size:12px;color:#1a1a1a;transform:scaleX(0.858);">Visual Mode</span>
<div class="b" style="left:140.5px;top:446px;width:62.5px;height:19px;background:#e1e1e1;border:1px solid #b4b4b4;box-sizing:border-box;"></div><span class="t" style="left:147.1px;top:450px;font-size:12px;color:#1a1a1a;transform:scaleX(0.859);">Templates</span>
<div class="b" style="left:48px;top:467px;width:45.5px;height:18.5px;background:#e1e1e1;border:1px solid #b4b4b4;box-sizing:border-box;"></div><span class="t" style="left:55.1px;top:471px;font-size:12px;color:#1a1a1a;transform:scaleX(0.840);">Trades</span>
<div class="b" style="left:97px;top:467px;width:47.5px;height:18.5px;background:#e1e1e1;border:1px solid #b4b4b4;box-sizing:border-box;"></div><span class="t" style="left:107.5px;top:471px;font-size:12px;color:#1a1a1a;transform:scaleX(0.863);">News</span>
<div class="b" style="left:147.5px;top:467px;width:55.5px;height:18.5px;background:#e1e1e1;border:1px solid #b4b4b4;box-sizing:border-box;"></div><span class="t" style="left:158.7px;top:471px;font-size:12px;color:#1a1a1a;transform:scaleX(0.837);">Charts</span>
<div class="b" style="left:48px;top:488px;width:89px;height:19px;background:#cce4f7;border:1px solid #00559b;box-sizing:border-box;"></div><span class="t" style="left:54.5px;top:491px;font-size:12px;color:#1a1a1a;transform:scaleX(0.857);">History on chart</span>
<div class="b" style="left:140.5px;top:488px;width:62.5px;height:19px;background:#e1e1e1;border:1px solid #b4b4b4;box-sizing:border-box;"></div><span class="t" style="left:150.4px;top:491px;font-size:12px;color:#1a1a1a;transform:scaleX(0.830);">Sessions</span>
<div class="b" style="left:208px;top:391.5px;width:213.5px;height:116.5px;background:#fff;border:1px solid #dcdcdc;box-sizing:border-box;"></div>
<div class="b" style="left:250px;top:374px;width:163.5px;height:18px;background:#f0f0f0;border:1px solid #d9d9d9;box-sizing:border-box;"></div>
<div class="b" style="left:292px;top:375px;width:1px;height:16px;background:#d9d9d9;"></div>
<div class="b" style="left:333.5px;top:375px;width:1px;height:16px;background:#d9d9d9;"></div>
<div class="b" style="left:379.5px;top:375px;width:1px;height:16px;background:#d9d9d9;"></div>
<div class="b" style="left:208px;top:372px;width:42.5px;height:20.5px;background:#fff;border:1px solid #d9d9d9;border-bottom:none;box-sizing:border-box;"></div>
<span class="t" style="left:212.75px;top:375px;font-size:12px;color:#1a1a1a;transform:scaleX(0.853);">Market</span>
<span class="t" style="left:251.6px;top:376px;font-size:12px;color:#1a1a1a;transform:scaleX(0.849);">Pending</span>
<span class="t" style="left:296.6px;top:376px;font-size:12px;color:#1a1a1a;transform:scaleX(0.821);">Presets</span>
<span class="t" style="left:337.25px;top:376px;font-size:12px;color:#1a1a1a;transform:scaleX(0.886);">Account</span>
<span class="t" style="left:383.75px;top:376px;font-size:12px;color:#1a1a1a;transform:scaleX(0.855);">Save</span>
<div class="b" style="left:218px;top:400px;width:88px;height:38px;background:#9acd32;border:2px solid #0078d7;box-sizing:border-box;"></div>
<span class="t" style="left:224.4px;top:413px;font-size:12px;color:#14280a;transform:scaleX(0.893);">Buy @ 1.18327</span>
<div class="b" style="left:309px;top:400px;width:87px;height:38px;background:#f6d6d2;border:1px solid #c8b4b0;box-sizing:border-box;"></div>
<div class="b" style="left:311px;top:403px;width:82px;height:32px;background:#ff1212;"></div>
<span class="t" style="left:315.3px;top:413px;font-size:12px;color:#fff;transform:scaleX(0.878);">Sell @ 1.18322</span>
<span class="t" style="left:220.3px;top:443px;font-size:12px;color:#1a1a1a;transform:scaleX(0.934);">Wed, 26/08/2020  17:00:00</span>
<span class="t" style="left:220.3px;top:460px;font-size:12px;color:#1a1a1a;transform:scaleX(0.871);">Spread:  0.5 pips</span>
<div class="b" style="left:220px;top:484.5px;width:62px;height:17px;background:#e1e1e1;border:1px solid #b4b4b4;box-sizing:border-box;"></div><span class="t" style="left:225.3px;top:487px;font-size:12px;color:#dc143c;transform:scaleX(0.859);">Close Last</span>
<div class="b" style="left:290px;top:484.5px;width:62px;height:17px;background:#e1e1e1;border:1px solid #b4b4b4;box-sizing:border-box;"></div><span class="t" style="left:299.4px;top:487px;font-size:12px;color:#dc143c;transform:scaleX(0.850);">Close All</span>
<div class="b" style="left:47px;top:521px;width:374.5px;height:49px;border:1px solid #dcdcdc;box-sizing:border-box;"></div>
<div class="b" style="left:53px;top:515px;width:36px;height:12px;background:#f0f0f0;"></div>
<span class="t" style="left:56.4px;top:515px;font-size:12px;color:#1a1a1a;transform:scaleX(0.856);">Speed</span>
<svg class="b" style="left:50px;top:531px" width="18" height="36" viewBox="0 0 18 36"><circle cx="8.7" cy="8.5" r="6" fill="#fff" stroke="#333" stroke-width="1"/><circle cx="8.7" cy="8.5" r="3.2" fill="#333"/><circle cx="8.7" cy="26.3" r="6" fill="#fff" stroke="#333" stroke-width="1"/></svg>
<span class="t" style="left:72.1px;top:534px;font-size:12px;color:#1a1a1a;transform:scaleX(0.932);">Ticks/sec</span>
<span class="t" style="left:71.6px;top:552px;font-size:12px;color:#1a1a1a;transform:scaleX(0.828);">Real-time</span>
<div class="b" style="left:131px;top:549px;width:229px;height:3.5px;background:#e7eaea;border:1px solid #d6d6d6;box-sizing:border-box;"></div>
<svg class="b" style="left:126px;top:543px" width="11" height="19" viewBox="0 0 11 19"><path d="M0 0H11V14L5.5 18.6L0 14Z" fill="#0078d7"/></svg>
<span class="t" style="left:220.6px;top:529px;font-size:12px;color:#1a1a1a;transform:scaleX(0.938);">1 tick/sec</span>
<div class="b" style="left:369.5px;top:537px;width:21.5px;height:22px;background:#e1e1e1;border:1px solid #b4b4b4;box-sizing:border-box;"></div><span class="t" style="left:376.4px;top:541px;font-size:12px;color:#1a1a1a;">&gt;</span>
<div class="b" style="left:395px;top:537px;width:22px;height:22px;background:#e1e1e1;border:1px solid #b4b4b4;box-sizing:border-box;"></div><span class="t" style="left:401.4px;top:541px;font-size:12px;color:#1a1a1a;transform:scaleX(0.830);">...</span>
<div class="b" style="left:47px;top:579.5px;width:374.5px;height:31.5px;border:1px solid #dcdcdc;box-sizing:border-box;"></div>
<div class="b" style="left:52px;top:573px;width:56px;height:12px;background:#f0f0f0;"></div>
<span class="t" style="left:55.6px;top:574px;font-size:12px;color:#1a1a1a;transform:scaleX(0.871);">Navigation</span>
<div class="b" style="left:52.5px;top:588px;width:67.5px;height:18.5px;background:#e1e1e1;border:1px solid #b4b4b4;box-sizing:border-box;"></div><span class="t" style="left:58.1px;top:592px;font-size:12px;color:#8a8a8a;transform:scaleX(0.810);">|&lt;</span>
<span class="t" style="left:70px;top:592px;font-size:12px;color:#1a1a1a;transform:scaleX(0.875);">Prev. Bar</span>
<div class="b" style="left:127.5px;top:588px;width:215.5px;height:18.5px;background:#e1e1e1;border:1px solid #b4b4b4;box-sizing:border-box;"></div>
<span class="t" style="left:131.5px;top:592px;font-size:12px;color:#1a1a1a;transform:scaleX(0.874);">Standard chart - H1</span>
<svg class="b" style="left:329.5px;top:595px" width="9" height="6" viewBox="0 0 9 6"><path d="M.7 .7L4.5 4.6L8.3 .7" stroke="#444" stroke-width="1.1" fill="none"/></svg>
<div class="b" style="left:350.5px;top:588px;width:67px;height:18.5px;background:#e1e1e1;border:1px solid #b4b4b4;box-sizing:border-box;"></div><span class="t" style="left:357.7px;top:592px;font-size:12px;color:#1a1a1a;transform:scaleX(0.850);">Next Bar &gt;|</span>
<div class="b" style="left:45px;top:615.5px;width:381px;height:1px;background:#6e6e6e;"></div>
<div class="b" style="left:45px;top:616.5px;width:1px;height:16.5px;background:#7a7a7a;"></div>
<div class="b" style="left:46px;top:616.5px;width:380px;height:1px;background:#fff;"></div>
<span class="t" style="left:51.5px;top:619px;font-size:12px;color:#1a1a1a;transform:scaleX(0.831);">Equity:</span>
<span class="t" style="left:90.2px;top:619px;font-size:12px;color:#4c9a4c;transform:scaleX(0.885);">541.50</span>
<span class="t" style="left:132.3px;top:619px;font-size:12px;color:#4c9a4c;transform:scaleX(0.834);">(+8.30%)</span>
<span class="t" style="left:229.2px;top:619px;font-size:12px;color:#1a1a1a;transform:scaleX(0.904);">Floating P/L:</span>
<span class="t" style="left:297.5px;top:619px;font-size:12px;color:#4c9a4c;transform:scaleX(0.891);">0.00</span>
</section>
<footer id="tabs-status">
<div class="b" style="left:17px;top:685px;width:846px;height:1px;background:#2a2a2a;"></div>
<div class="b" style="left:1017px;top:685px;width:23px;height:1px;background:#2a2a2a;"></div>
<div class="b" style="left:16px;top:686px;width:1024px;height:20px;background:#f0f0f0;"></div>
<div class="b" style="left:16px;top:99px;width:1px;height:607px;background:#b8b8b8;"></div>
<div class="b" style="left:17px;top:99px;width:1px;height:606px;background:#5a5a5a;"></div>
<span class="t" style="left:34.7px;top:690px;font-size:11.5px;color:#7c7c7c;transform:scaleX(0.947);">AUDJPY,H1</span>
<span class="t" style="left:118.5px;top:690px;font-size:11.5px;color:#7c7c7c;transform:scaleX(0.948);">AUDUSD,H4</span>
<span class="t" style="left:206px;top:690px;font-size:11.5px;color:#7c7c7c;transform:scaleX(0.955);">CADJPY,H1</span>
<span class="t" style="left:289px;top:690px;font-size:11.5px;color:#7c7c7c;transform:scaleX(0.906);">EURJPY,H1</span>
<span class="t" style="left:369px;top:690px;font-size:11.5px;color:#7c7c7c;transform:scaleX(0.906);">GBPJPY,H1</span>
<span class="t" style="left:448.5px;top:690px;font-size:11.5px;color:#7c7c7c;transform:scaleX(0.925);">EURAUD,H1</span>
<span class="t" style="left:533.5px;top:690px;font-size:11.5px;color:#7c7c7c;transform:scaleX(0.898);">EURJPY,H1</span>
<span class="t" style="left:614px;top:690px;font-size:11.5px;color:#7c7c7c;transform:scaleX(0.955);">USDCAD,H1</span>
<span class="t" style="left:700px;top:690px;font-size:11.5px;color:#7c7c7c;transform:scaleX(0.940);">EURCAD,H1</span>
<span class="t" style="left:786px;top:690px;font-size:11.5px;color:#7c7c7c;transform:scaleX(0.939);">EURNOK,H1</span>
<div class="b" style="left:106px;top:688px;width:1.2px;height:14px;background:#707070;"></div>
<div class="b" style="left:193.9px;top:688px;width:1.2px;height:14px;background:#707070;"></div>
<div class="b" style="left:277.5px;top:688px;width:1.2px;height:14px;background:#707070;"></div>
<div class="b" style="left:356.5px;top:688px;width:1.2px;height:14px;background:#707070;"></div>
<div class="b" style="left:436.5px;top:688px;width:1.2px;height:14px;background:#707070;"></div>
<div class="b" style="left:521.5px;top:688px;width:1.2px;height:14px;background:#707070;"></div>
<div class="b" style="left:602px;top:688px;width:1.2px;height:14px;background:#707070;"></div>
<div class="b" style="left:689.5px;top:688px;width:1.2px;height:14px;background:#707070;"></div>
<div class="b" style="left:774.5px;top:688px;width:1.2px;height:14px;background:#707070;"></div>
<div class="b" style="left:862px;top:685px;width:141px;height:19px;background:#fff;border-left:1px solid #2a2a2a;border-bottom:1px solid #2a2a2a;box-sizing:border-box;"></div>
<div class="b" style="left:1003px;top:685px;width:14px;height:19px;background:#f8f8f8;"></div>
<span class="t" style="left:873.2px;top:688px;font-size:12px;color:#000;transform:scaleX(0.905);">!STD_EURUSD,H1 (offline</span>
<svg class="b" style="left:1004px;top:688px" width="34" height="14" viewBox="0 0 34 14"><path d="M7 3V8.6L3.6 5.8Z" fill="#c8c8c8"/><path d="M22.4 2.4V9L26.3 5.7Z" fill="#000"/></svg>
<div class="b" style="left:16px;top:706px;width:1024px;height:22px;background:#f0f0f0;"></div>
<div class="b" style="left:16px;top:704.5px;width:1024px;height:2px;background:#fafafa;"></div>
<span class="t" style="left:18.75px;top:712px;font-size:12px;color:#000;transform:scaleX(0.921);">For Help, press F1</span>
<span class="t" style="left:352.5px;top:712px;font-size:12px;color:#000;letter-spacing:-0.09px;">Default</span>
<span class="t" style="left:468.5px;top:712px;font-size:12px;color:#000;transform:scaleX(0.888);">2020.08.26 17:00</span>
<span class="t" style="left:570px;top:712px;font-size:12px;color:#000;transform:scaleX(0.901);">O: 1.18322</span>
<span class="t" style="left:641.5px;top:712px;font-size:12px;color:#000;transform:scaleX(0.894);">H: 1.18322</span>
<span class="t" style="left:712.5px;top:712px;font-size:12px;color:#000;transform:scaleX(0.882);">L: 1.18322</span>
<span class="t" style="left:781.5px;top:712px;font-size:12px;color:#000;transform:scaleX(0.869);">C: 1.18322</span>
<span class="t" style="left:851px;top:712px;font-size:12px;color:#000;transform:scaleX(0.837);">V: 1</span>
<span class="t" style="left:943.5px;top:712px;font-size:12px;color:#000;transform:scaleX(0.949);">2232/2 kb</span>
<div class="b" style="left:346px;top:709px;width:1px;height:17px;background:#c4c4c4;"></div>
<div class="b" style="left:460.5px;top:709px;width:1px;height:17px;background:#c4c4c4;"></div>
<div class="b" style="left:563px;top:709px;width:1px;height:17px;background:#c4c4c4;"></div>
<div class="b" style="left:634.5px;top:709px;width:1px;height:17px;background:#c4c4c4;"></div>
<div class="b" style="left:704.5px;top:709px;width:1px;height:17px;background:#c4c4c4;"></div>
<div class="b" style="left:774.5px;top:709px;width:1px;height:17px;background:#c4c4c4;"></div>
<div class="b" style="left:844px;top:709px;width:1px;height:17px;background:#c4c4c4;"></div>
<div class="b" style="left:909.9px;top:709px;width:1px;height:17px;background:#c4c4c4;"></div>
<svg class="b" style="left:916px;top:711px" width="24" height="13" viewBox="0 0 24 13"><rect x="0" y="0" width="2" height="10.6" fill="#7a9a1c"/><rect x="0" y="10.6" width="2" height="2.0" fill="#1c4a6c"/><rect x="3" y="0" width="2" height="9.3" fill="#7a9a1c"/><rect x="3" y="9.3" width="2" height="3.2" fill="#1c4a6c"/><rect x="6" y="0" width="2" height="8.1" fill="#7a9a1c"/><rect x="6" y="8.1" width="2" height="4.5" fill="#1c4a6c"/><rect x="9" y="0" width="2" height="6.8" fill="#7a9a1c"/><rect x="9" y="6.8" width="2" height="5.8" fill="#1c4a6c"/><rect x="12" y="0" width="2" height="5.6" fill="#7a9a1c"/><rect x="12" y="5.6" width="2" height="7.0" fill="#1c4a6c"/><rect x="15" y="0" width="2" height="4.3" fill="#7a9a1c"/><rect x="15" y="4.3" width="2" height="8.2" fill="#1c4a6c"/><rect x="18" y="0" width="2" height="3.1" fill="#7a9a1c"/><rect x="18" y="3.1" width="2" height="9.5" fill="#1c4a6c"/><rect x="21" y="0" width="2" height="1.8" fill="#7a9a1c"/><rect x="21" y="1.8" width="2" height="10.8" fill="#1c4a6c"/></svg>
</footer>
</body></html>
